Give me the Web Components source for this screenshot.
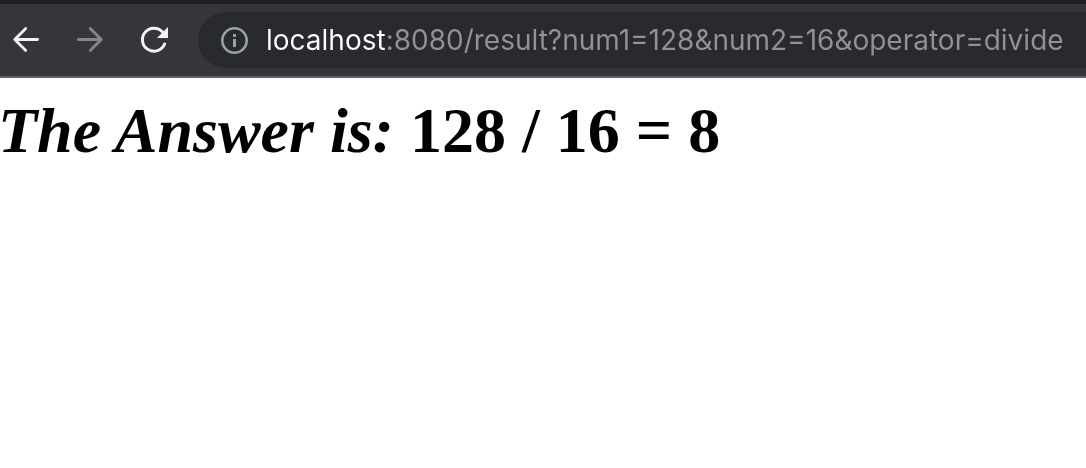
<!DOCTYPE html>
<html lang="en">
<head>
<meta charset="utf-8">
<title>Result</title>
<style>
  html, body { margin: 0; background: #fff; color: #000; overflow-x: hidden; }
</style>
</head>
<body>
<browser-toolbar>
  <tool-button label="Back">
    <svg width="32" height="32" viewBox="0 0 32 32" fill="none" stroke="currentColor" stroke-width="2.800" stroke-linecap="round" stroke-linejoin="round"><path d="M27.600 15.500H5M15.700 4.500L4.700 15.500L15.700 26.500"/></svg>
  </tool-button>
  <tool-button label="Forward" disabled>
    <svg width="32" height="32" viewBox="0 0 32 32" fill="none" stroke="currentColor" stroke-width="2.800" stroke-linecap="round" stroke-linejoin="round"><path d="M4.400 15.500H27M16.300 4.500L27.300 15.500L16.300 26.500"/></svg>
  </tool-button>
  <tool-button label="Reload">
    <svg width="32" height="32" viewBox="0 0 32 32" fill="none" stroke="currentColor" stroke-width="3" stroke-linecap="round"><path d="M26.600 20A11.500 11.500 0 1 1 24.500 8"/><path d="M30 3V14H19Z" fill="currentColor" stroke="none"/></svg>
  </tool-button>
  <address-bar slot="address" host="localhost" rest=":8080/result?num1=128&amp;num2=16&amp;operator=divide"></address-bar>
</browser-toolbar>
<answer-heading><span slot="label">The Answer is:</span> 128 / 16 = 8</answer-heading>

<script>
customElements.define('browser-toolbar', class extends HTMLElement {
  constructor() {
    super();
    this.attachShadow({ mode: 'open' }).innerHTML = `
      <style>
        :host { display: block; background: #35363a; border-top: 4px solid #202124; border-bottom: 2px solid #5e5f62; }
        nav { display: flex; align-items: center; gap: 28px; padding: 8px 0 8px 10px; }
        .buttons { display: flex; gap: 32px; }
        slot[name] { display: block; flex: 1; min-width: 0; }
      </style>
      <nav aria-label="Browser"><div class="buttons"><slot></slot></div><slot name="address"></slot></nav>`;
  }
});

customElements.define('tool-button', class extends HTMLElement {
  constructor() {
    super();
    this.attachShadow({ mode: 'open' }).innerHTML = `
      <style>
        :host { display: block; flex: none; color: #f1f3f4; }
        :host([disabled]) { color: #868789; }
        button { display: flex; padding: 0; border: 0; background: none; color: inherit; }
      </style>
      <button type="button"><slot></slot></button>`;
  }
  connectedCallback() {
    const button = this.shadowRoot.querySelector('button');
    button.setAttribute('aria-label', this.getAttribute('label'));
    button.disabled = this.hasAttribute('disabled');
  }
});

customElements.define('address-bar', class extends HTMLElement {
  constructor() {
    super();
    this.attachShadow({ mode: 'open' }).innerHTML = `
      <style>
        :host { display: block; }
        label { display: flex; align-items: center; gap: 16px; height: 56px; padding-left: 20px; background: #292a2d; border-radius: 28px 0 0 28px; color: #9aa0a6; }
        svg { flex: none; }
        input {
          flex: 1; min-width: 0; height: 40px; padding: 0; border: 0; outline: 0;
          font: 430 28px/40px Inter, "Liberation Sans", sans-serif;
          color: #919294;
          background: linear-gradient(to right, #fff var(--host-width), #919294 var(--host-width));
          -webkit-background-clip: text; background-clip: text;
          -webkit-text-fill-color: transparent;
        }
      </style>
      <label>
        <svg width="32" height="32" viewBox="0 0 32 32" fill="none" stroke="currentColor"><circle cx="16.500" cy="16.500" r="12.200" stroke-width="2.600"/><path d="M16.500 15V23M16.500 10V13" stroke-width="3"/></svg>
        <input type="text" aria-label="Address" spellcheck="false">
      </label>`;
  }
  connectedCallback() {
    const input = this.shadowRoot.querySelector('input');
    const host = this.getAttribute('host');
    input.value = host + this.getAttribute('rest');
    const pen = document.createElement('canvas').getContext('2d');
    pen.font = getComputedStyle(input).font;
    input.style.setProperty('--host-width', Math.round(pen.measureText(host).width) + 'px');
  }
});

customElements.define('answer-heading', class extends HTMLElement {
  constructor() {
    super();
    this.attachShadow({ mode: 'open' }).innerHTML = `
      <style>
        :host { display: block; }
        h1 { margin: 16px -2px; font: bold 64px/74px "Liberation Serif", "Times New Roman", serif; }
      </style>
      <h1><i><slot name="label"></slot></i> <slot></slot></h1>`;
  }
});
</script>
</body>
</html>
